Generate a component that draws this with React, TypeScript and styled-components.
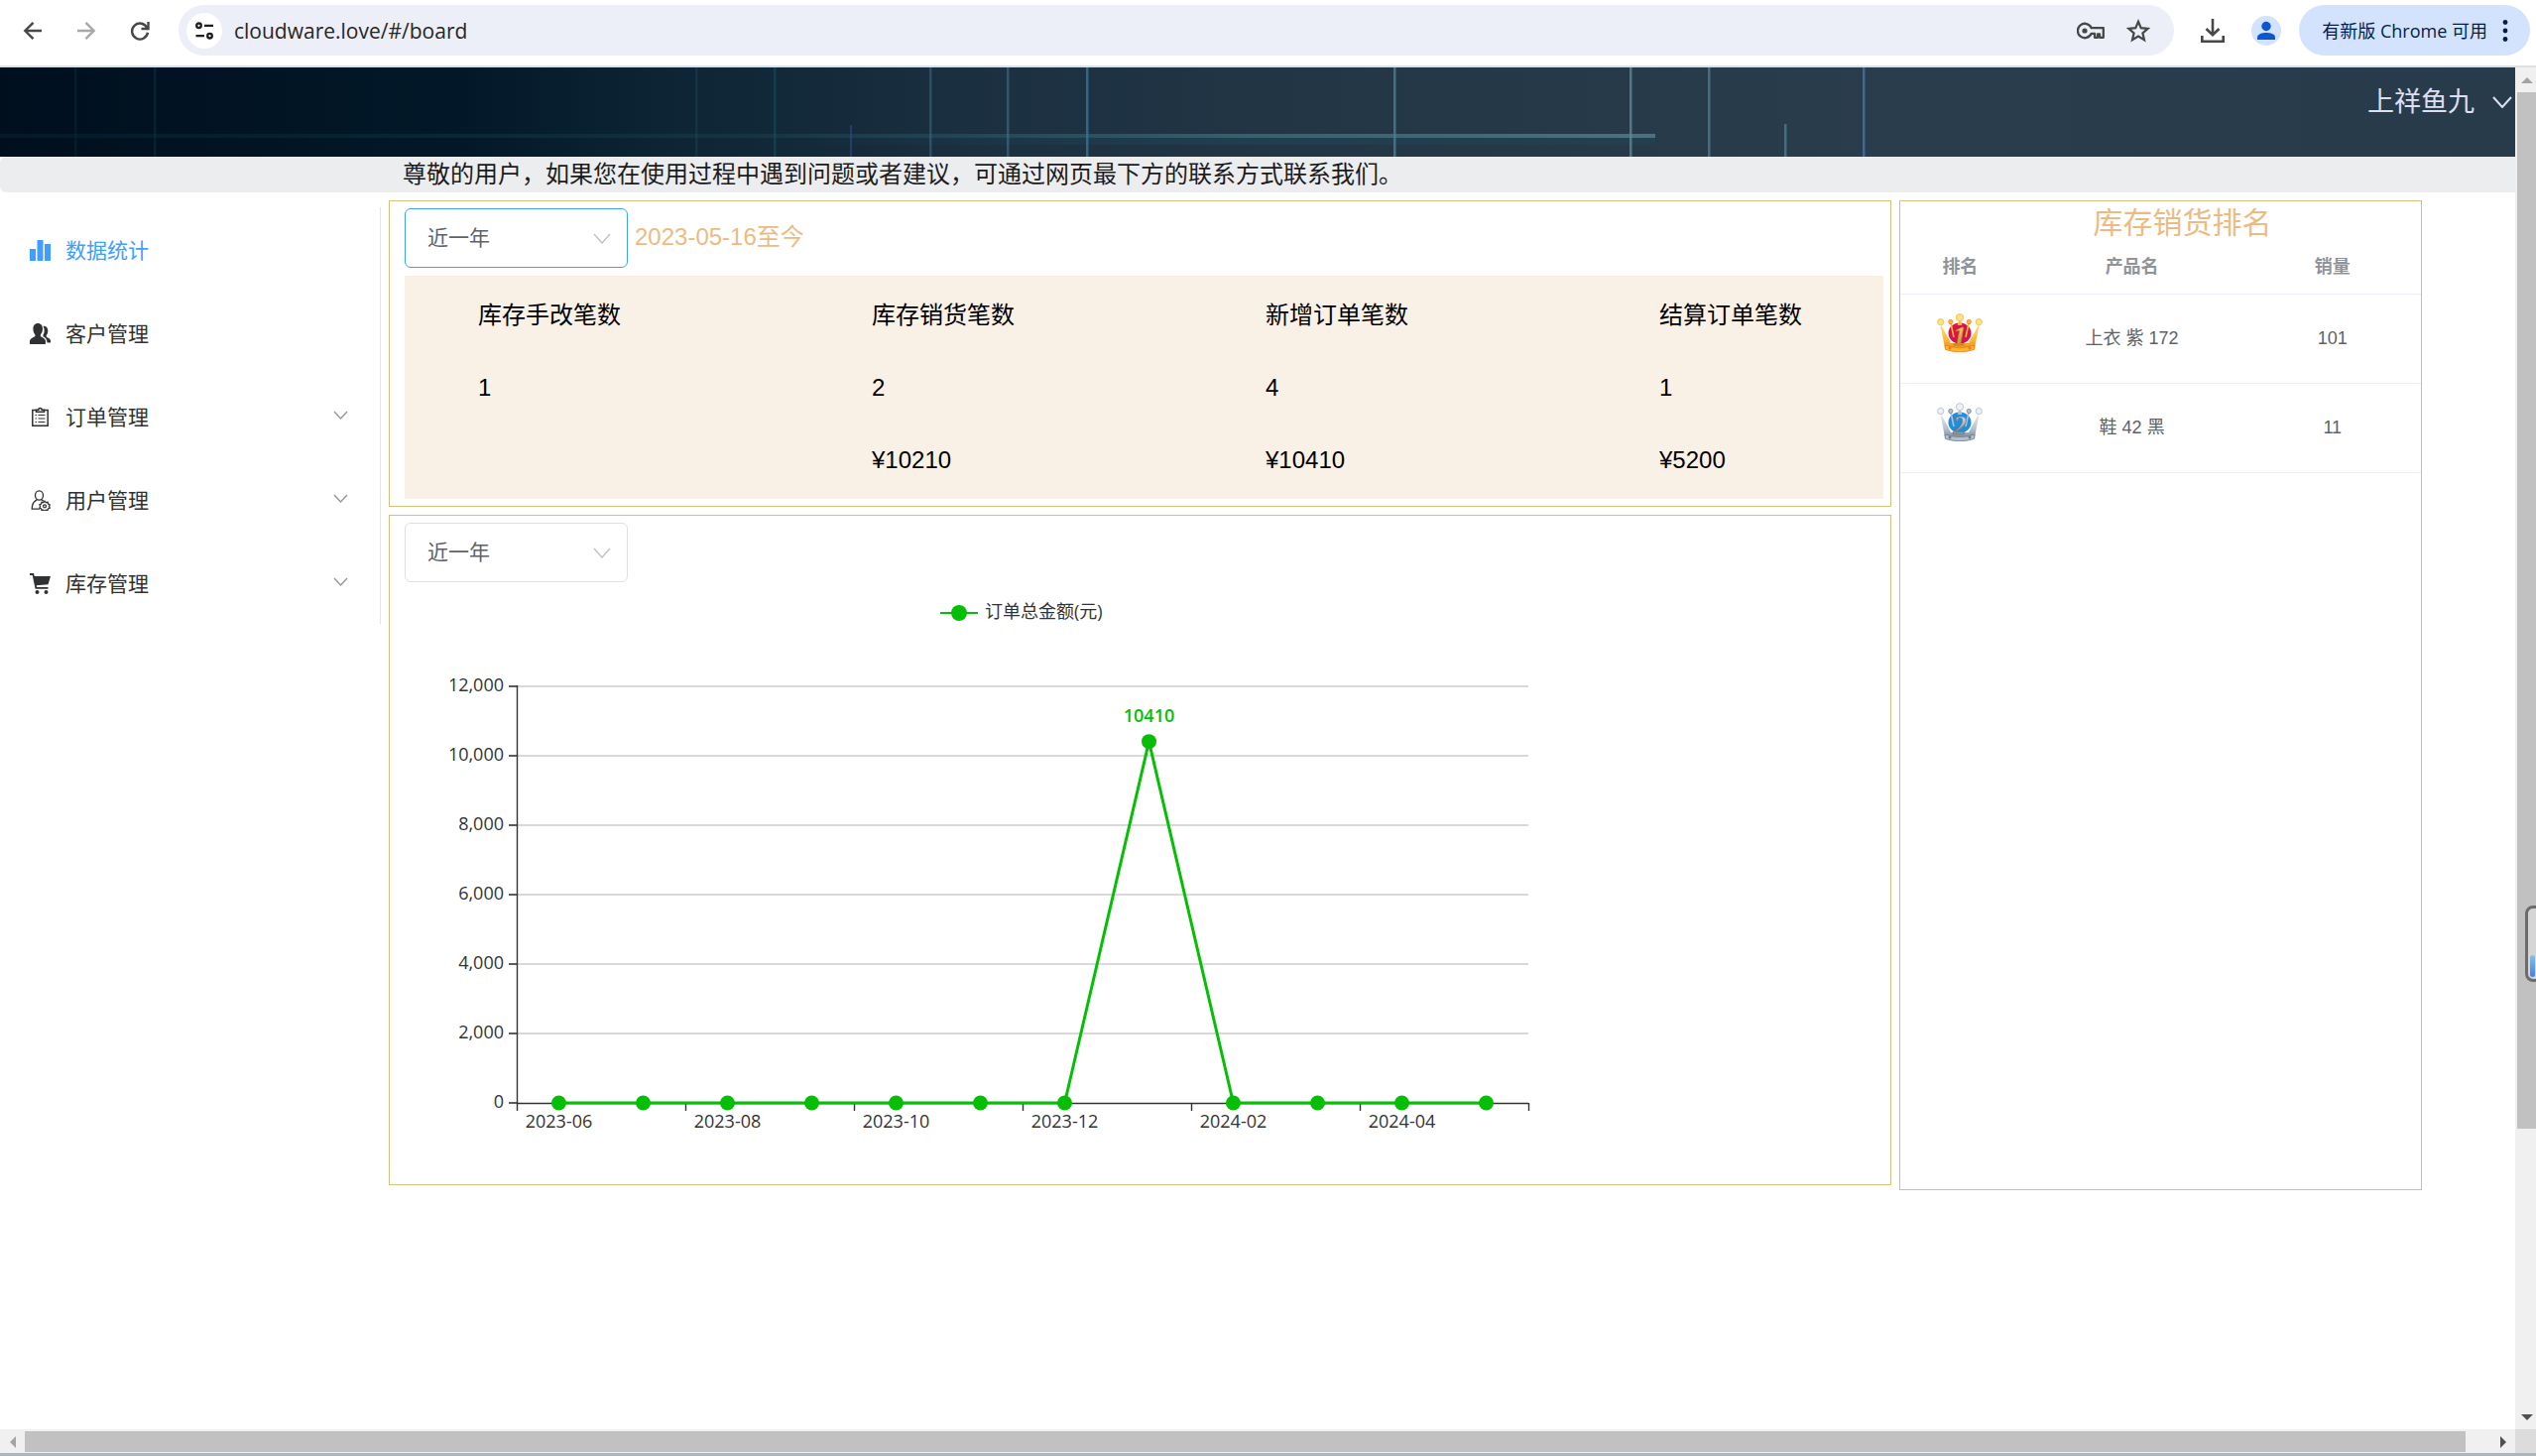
import React from "react";
import styled, { createGlobalStyle } from "styled-components";

const Global = createGlobalStyle`
  *, *::before, *::after { box-sizing: border-box; }
  body {
    margin: 0;
    background: #fff;
    font-family: "Liberation Sans", "Noto Sans CJK SC", sans-serif;
    color: #303133;
  }
  button, input, select { font: inherit; color: inherit; border: 0; background: none; padding: 0; margin: 0; outline: none; }
  button { cursor: pointer; }
  svg { display: block; flex: none; }
  h1, h2, p, ul, dl, dd { margin: 0; padding: 0; }
`;

const Shell = styled.div`
  display: flex;
  flex-direction: column;
  height: 100vh;
  overflow: hidden;
`;

/* ---------- browser toolbar ---------- */

const Toolbar = styled.header`
  display: flex;
  align-items: center;
  height: 68px;
  flex: none;
  padding: 0 6px 5px 18px;
  border-bottom: 2px solid #dce0e1;
  background: #fff;
  font-family: "Open Sans", "Noto Sans CJK SC", sans-serif;
`;

const NavButtons = styled.nav`
  display: flex;
  gap: 24px;
  margin-right: 24px;
`;

const IconButton = styled.button<{ $color?: string }>`
  display: grid;
  place-items: center;
  width: 30px;
  height: 30px;
  flex: none;
  color: ${(p) => p.$color ?? "#474747"};
`;

const AddressBar = styled.form`
  display: flex;
  align-items: center;
  flex: 1;
  height: 51px;
  padding: 0 21px 0 8px;
  gap: 12px;
  border-radius: 26px;
  background: #eceef8;
`;

const SiteButton = styled.button`
  display: grid;
  place-items: center;
  width: 36px;
  height: 36px;
  border-radius: 50%;
  background: #fff;
  color: #1f1f1f;
`;

const UrlInput = styled.input`
  flex: 1;
  min-width: 0;
  font-size: 21px;
  line-height: 30px;
  color: #262626;
`;

const AddressActions = styled.div`
  display: flex;
  gap: 18px;
`;

const ToolbarActions = styled.div`
  display: flex;
  align-items: center;
  gap: 24px;
  margin: 0 18px 0 24px;
`;

const Avatar = styled.button`
  display: grid;
  place-items: center;
  width: 30px;
  height: 30px;
  border-radius: 50%;
  background: #d3e3fd;
  color: #0b57d0;
`;

const UpdateChip = styled.button`
  display: flex;
  align-items: center;
  gap: 15px;
  height: 51px;
  padding: 0 22px 0 23px;
  border-radius: 26px;
  background: #d3e3fd;
  color: #041e49;
  font-size: 18px;
  line-height: 24px;
  white-space: nowrap;
`;

/* ---------- scrolled page ---------- */

const Viewport = styled.div`
  display: flex;
  flex: 1;
  min-height: 0;
`;

const Page = styled.div`
  flex: 1;
  min-width: 0;
  overflow: hidden;
`;

const Banner = styled.div`
  position: relative;
  display: flex;
  justify-content: flex-end;
  height: 90px;
  padding: 17px 3px 0 0;
  overflow: hidden;
  background: linear-gradient(90deg, #000f1e 0%, #021828 18%, #0d2535 27%, #1a2f40 38%, #223646 52%, #293d4d 75%, #283b4b 100%);
`;

const BannerLines = styled.svg`
  position: absolute;
  inset: 0;
  width: 100%;
  height: 100%;
`;

const Account = styled.button`
  position: relative;
  display: flex;
  align-items: center;
  align-self: flex-start;
  gap: 18px;
  height: 36px;
  color: #dcdff2;
  font-size: 27px;
  line-height: 36px;
`;

const Notice = styled.p`
  height: 36px;
  padding-left: 406px;
  border-radius: 6px 0 0 6px;
  background: #ecedef;
  color: #1c1c1c;
  font-size: 24px;
  line-height: 36px;
`;

const Layout = styled.div`
  display: grid;
  grid-template-columns: 384px minmax(0, 1fr) 527px;
  gap: 8px;
  align-items: start;
  padding: 8px 94px 0 0;
`;

const Sidebar = styled.nav`
  margin-top: 7px;
  border-right: 1px solid #e2e4e9;
`;

const MenuItem = styled.button<{ $active?: boolean }>`
  display: flex;
  align-items: center;
  gap: 15px;
  width: 100%;
  height: 84px;
  padding: 3px 32px 0 30px;
  color: ${(p) => (p.$active ? "#409eff" : "#303133")};
  font-size: 21px;
  line-height: 30px;
  text-align: left;
`;

const MenuLabel = styled.span`
  flex: 1;
`;

const MenuArrow = styled.span`
  padding-bottom: 5px;
  color: #909399;
`;

const Column = styled.main`
  display: flex;
  flex-direction: column;
  gap: 8px;
`;

const Card = styled.section`
  border: 1px solid #d0c27c;
  background: #fff;
`;

const PaddedCard = styled(Card)`
  padding: 7px 7px 7px 15px;
`;

const FilterRow = styled.div`
  display: flex;
  align-items: center;
  gap: 7px;
`;

const SelectBox = styled.label<{ $focused?: boolean }>`
  display: grid;
  align-items: center;
  width: 225px;
  height: 60px;
  border: 1px solid ${(p) => (p.$focused ? "#409eff" : "#dcdfe6")};
  border-radius: 6px;
  color: #606266;
`;

const SelectInput = styled.select`
  grid-area: 1 / 1;
  width: 100%;
  height: 58px;
  padding-left: 22px;
  appearance: none;
  font-size: 21px;
  line-height: 30px;
`;

const SelectArrow = styled.span`
  grid-area: 1 / 1;
  justify-self: end;
  margin-right: 16px;
  color: #c0c4cc;
  pointer-events: none;
`;

const Range = styled.span`
  padding-bottom: 3px;
  color: #ecbb82;
  font-size: 24px;
  line-height: 36px;
`;

const Stats = styled.div`
  display: flex;
  justify-content: space-between;
  margin-top: 8px;
  padding: 3px 82px 3px 74px;
  background: #f9f0e6;
  color: #000;
  font-size: 24px;
  line-height: 73px;
`;

const Stat = styled.dl`
  min-height: 219px;
`;

const ChartFrame = styled.div`
  height: 600px;
`;

const AxisText = styled.text`
  fill: #333;
  font-family: "Open Sans", "Noto Sans CJK SC", sans-serif;
  font-size: 18px;
`;

const PeakText = styled(AxisText)`
  fill: #05be05;
  font-weight: 600;
`;

const RankCard = styled(Card)`
  min-height: 998px;
`;

const RankTitle = styled.h2`
  padding: 1px 0 0 44px;
  color: #ecbb82;
  font-size: 30px;
  font-weight: 400;
  line-height: 42px;
  text-align: center;
`;

const Table = styled.table`
  width: 100%;
  border-collapse: collapse;
  table-layout: fixed;
  font-size: 18px;
  line-height: 24px;
  color: #606266;
  text-align: center;
`;

const HeadCell = styled.th<{ $width: string }>`
  width: ${(p) => p.$width};
  height: 50px;
  padding: 0 0 4px;
  border-bottom: 1px solid #ebeef5;
  color: #909399;
  font-weight: 700;
`;

const Cell = styled.td`
  height: 90px;
  padding: 0;
  border-bottom: 1px solid #ebeef5;
`;

const CrownSlot = styled.span`
  display: flex;
  justify-content: center;
  padding-bottom: 12px;
`;

/* ---------- scroll bars ---------- */

const VerticalBar = styled.div`
  display: flex;
  flex-direction: column;
  width: 21px;
  flex: none;
  background: #f0f0f0;
`;

const HorizontalBar = styled.div`
  display: flex;
  align-items: stretch;
  height: 27px;
  flex: none;
  background: #f0f0f0;
  border-bottom: 3px solid #a9b8be;
`;

const BarButton = styled.button<{ $dark?: boolean }>`
  display: grid;
  place-items: center;
  width: 25px;
  height: 25px;
  flex: none;
  color: ${(p) => (p.$dark ? "#505050" : "#a3a3a3")};
`;

const VerticalButton = styled(BarButton)`
  width: 21px;
  padding-left: 2px;
`;

const Track = styled.div`
  position: relative;
  display: flex;
  flex-direction: column;
  flex: 1;
  padding-left: 2px;
`;

const VerticalThumb = styled.div`
  height: 79%;
  background: #c1c1c1;
`;

const HorizontalTrack = styled.div`
  flex: 1;
  padding: 2px 0 1px;
`;

const HorizontalThumb = styled.div`
  width: 99%;
  height: 100%;
  background: #c1c1c1;
`;

const Corner = styled.div`
  width: 21px;
  background: #dcdcdc;
`;

const FloatingMeter = styled.div`
  position: absolute;
  top: 62%;
  left: 10px;
  display: flex;
  align-items: flex-end;
  width: 20px;
  height: 77px;
  padding: 2px;
  border: 3px solid #6c6c6c;
  border-radius: 8px;
  background: #d5d5d5;
`;

const MeterFill = styled.div`
  width: 5px;
  height: 22px;
  border-radius: 3px;
  background: linear-gradient(#7cc3f5, #3b82f0);
`;

/* ---------- icons ---------- */

const Chevron = ({ w, h, stroke = 1.5 }: { w: number; h: number; stroke?: number }) => (
  <svg width={w} height={h} viewBox={`0 0 ${w} ${h}`} fill="none" stroke="currentColor" strokeWidth={stroke} aria-hidden="true">
    <path d={`M1 1 L${w / 2} ${h - 1} L${w - 1} 1`} />
  </svg>
);

const Triangle = ({ dir }: { dir: "up" | "down" | "left" | "right" }) => {
  const paths = {
    up: "M0 9 L6 3 L12 9Z",
    down: "M0 3 L6 9 L12 3Z",
    left: "M9 0 L3 6 L9 12Z",
    right: "M3 0 L9 6 L3 12Z",
  };
  return (
    <svg width="12" height="12" viewBox="0 0 12 12" fill="currentColor" aria-hidden="true">
      <path d={paths[dir]} />
    </svg>
  );
};

const BackIcon = () => (
  <svg width="20" height="20" viewBox="0 0 20 20" fill="none" stroke="currentColor" strokeWidth="2.4" aria-hidden="true">
    <path d="M19 10H3M10.5 1.8L2.3 10l8.2 8.2" />
  </svg>
);

const ForwardIcon = () => (
  <svg width="20" height="20" viewBox="0 0 20 20" fill="none" stroke="currentColor" strokeWidth="2.4" aria-hidden="true">
    <path d="M1 10H17M9.5 1.8L17.7 10l-8.2 8.2" />
  </svg>
);

const ReloadIcon = () => (
  <svg width="22" height="22" viewBox="0 0 22 22" fill="none" stroke="currentColor" strokeWidth="2.4" aria-hidden="true">
    <path d="M18.5 8.5A8 8 0 1 0 19 12.8" />
    <path d="M19.5 2v7h-7" />
  </svg>
);

const SiteIcon = () => (
  <svg width="20" height="20" viewBox="0 0 20 20" fill="none" stroke="currentColor" strokeWidth="2.3" aria-hidden="true">
    <circle cx="4.5" cy="4.8" r="2.3" />
    <path d="M10 4.8H19M1.5 15.2H10" />
    <circle cx="15.5" cy="15.2" r="2.3" />
  </svg>
);

const KeyIcon = () => (
  <svg width="28" height="18" viewBox="0 0 28 18" fill="none" stroke="currentColor" strokeWidth="2.3" aria-hidden="true">
    <path d="M14.7 6.2A7.2 7.2 0 1 0 14.7 11.8H18V15.8H21V12.5H23V15.8H26.8V6.2Z" strokeLinejoin="round" />
    <circle cx="8" cy="9" r="2.6" fill="currentColor" stroke="none" />
  </svg>
);

const StarIcon = () => (
  <svg width="24" height="24" viewBox="0 0 24 24" fill="none" stroke="currentColor" strokeWidth="2.2" aria-hidden="true">
    <path d="M12 2.8L14.7 9.2L21.6 9.8L16.4 14.3L18 21.1L12 17.5L6 21.1L7.6 14.3L2.4 9.8L9.3 9.2Z" />
  </svg>
);

const DownloadIcon = () => (
  <svg width="26" height="26" viewBox="0 0 26 26" fill="none" stroke="currentColor" strokeWidth="2.6" aria-hidden="true">
    <path d="M13 1V17M6.5 11L13 17.3L19.5 11M2.3 18V23.7H23.7V18" />
  </svg>
);

const PersonIcon = () => (
  <svg width="20" height="20" viewBox="0 0 20 20" fill="currentColor" aria-hidden="true">
    <circle cx="10" cy="5.5" r="4.7" />
    <path d="M1 19V16.5C1 13.3 6 12 10 12s9 1.3 9 4.500V19Z" />
  </svg>
);

const DotsIcon = () => (
  <svg width="6" height="24" viewBox="0 0 6 24" fill="currentColor" aria-hidden="true">
    <circle cx="3" cy="3.5" r="2.4" />
    <circle cx="3" cy="12" r="2.4" />
    <circle cx="3" cy="20.5" r="2.4" />
  </svg>
);

const HistogramIcon = () => (
  <svg width="21" height="21" viewBox="0 0 21 21" fill="currentColor" aria-hidden="true">
    <rect x="0" y="9" width="6" height="12" />
    <rect x="7.5" y="0" width="6" height="21" />
    <rect x="15" y="4" width="6" height="17" />
  </svg>
);

const CustomersIcon = () => (
  <svg width="21" height="21" viewBox="0 0 21 21" fill="currentColor" aria-hidden="true">
    <path d="M8.200 0C11.300 0 13 2.300 13 5.600c0 2.500-.9 4.700-2.100 6v1.500c0 .7 4.600 1.600 5 4.400.2 1.300.1 2.400-.1 3.500H.2c-.3-1.100-.3-2.200-.1-3.500.5-2.800 5.300-3.700 5.300-4.400v-1.500C4.200 10.300 3.400 8.100 3.400 5.600 3.400 2.300 5 0 8.200 0Z" />
    <path d="M13.500 2.800c3.300-.3 4.800 2.100 4.800 4.600 0 2-.7 3.700-1.500 4.700v1.300c0 .6 3.500 1.300 4 3.400.2 1 .3 1.900.1 2.700h-3.400c-.2-3.500-1.300-5.200-4.100-6.300v-1.500c1.600-2.200 1.800-6 .1-8.900Z" />
  </svg>
);

const OrdersIcon = () => (
  <svg width="21" height="21" viewBox="0 0 21 21" fill="none" stroke="currentColor" strokeWidth="1.5" aria-hidden="true">
    <path d="M6.500 3.500H2.800V19.200H18.200V3.500H14.500" />
    <path d="M6.500 5.200V3.200H8.800C8.800 .8 12.200 .8 12.200 3.200H14.500V5.200Z" />
    <path d="M5.500 8.500h1.500M8.500 8.500h7M5.500 12h1.500M8.500 12h7M5.500 15.500h1.500M8.500 15.500h7" strokeWidth="1.2" />
  </svg>
);

const UsersIcon = () => (
  <svg width="21" height="21" viewBox="0 0 21 21" fill="none" stroke="currentColor" strokeWidth="1.3" aria-hidden="true">
    <ellipse cx="9.5" cy="5.5" rx="4" ry="4.6" />
    <path d="M7.200 9.800C3.800 11.500 2.200 14.500 2.200 19.200H10M11.800 9.800c.9.400 1.500.8 2.200 1.500" />
    <path d="M15 11.300l1.200 1.300 1.800-.3.500 1.700 1.700.8-.7 1.700.7 1.600-1.700.8-.5 1.600-1.800-.2-1.200 1.200-1.300-1.200-1.700.2-.5-1.600-1.600-.8.7-1.600-.7-1.700 1.600-.8.500-1.700 1.700.3Z" />
    <circle cx="15" cy="16.3" r="1.5" />
  </svg>
);

const CartIcon = () => (
  <svg width="21" height="21" viewBox="0 0 21 21" fill="currentColor" aria-hidden="true">
    <path d="M0 0H4L4.700 3H21L18.500 11.300L6.700 12.200L7.100 14H18.500V15.800H5.600L2.700 1.900H0Z" />
    <circle cx="7.5" cy="18.9" r="2" />
    <circle cx="16.5" cy="18.9" r="2" />
  </svg>
);

type CrownTone = { light: string; mid: string; deep: string; gem: string; digit: string };

const GOLD: CrownTone = { light: "#ffe38a", mid: "#fdb92e", deep: "#ee7a1c", gem: "#d8124f", digit: "#b8801a" };
const SILVER: CrownTone = { light: "#eef1f6", mid: "#b5bfcc", deep: "#6d7c8f", gem: "#1e8fdd", digit: "#6f7782" };

const Crown = ({ rank, tone }: { rank: number; tone: CrownTone }) => (
  <svg width="46" height="39" viewBox="0 0 46 39" role="img" aria-label={`第${rank}名`}>
    <defs>
      <linearGradient id={`crown${rank}`} x1="0" y1="0" x2="0" y2="1">
        <stop offset="0" stopColor={tone.light} />
        <stop offset=".6" stopColor={tone.mid} />
        <stop offset="1" stopColor={tone.deep} />
      </linearGradient>
      <linearGradient id={`digit${rank}`} x1="0" y1="0" x2="0" y2="1">
        <stop offset="0" stopColor={tone.light} />
        <stop offset="1" stopColor={tone.digit} />
      </linearGradient>
    </defs>
    <ellipse cx="23" cy="20" rx="11.5" ry="10.5" fill={tone.gem} />
    <path
      d="M3 9.500L8 35Q23 41 38 35L43 9.500L34 26L32 30H14L12 26Z"
      fill={`url(#crown${rank})`}
    />
    <path d="M13.800 9L17 24M32.200 9L29 24" stroke={tone.mid} strokeWidth="1.6" />
    <path d="M20.500 12L23 5L25.500 12Z" fill={tone.mid} />
    <path d="M8 32Q23 37 38 32L37.500 36.500Q23 41 8.500 36.500Z" fill={tone.mid} stroke={tone.deep} strokeWidth=".8" />
    <circle cx="13" cy="35" r="1.5" fill={tone.deep} />
    <circle cx="33" cy="35" r="1.5" fill={tone.deep} />
    <circle cx="3.7" cy="8.5" r="3.1" fill={tone.light} stroke={tone.mid} strokeWidth=".9" />
    <circle cx="42.3" cy="8.5" r="3.1" fill={tone.light} stroke={tone.mid} strokeWidth=".9" />
    <circle cx="13.8" cy="8.5" r="2.2" fill={tone.mid} stroke={tone.deep} strokeWidth=".7" />
    <circle cx="32.2" cy="8.5" r="2.2" fill={tone.mid} stroke={tone.deep} strokeWidth=".7" />
    <circle cx="23" cy="4.2" r="3.6" fill={tone.light} stroke={tone.mid} strokeWidth=".9" />
    <text
      x="23"
      y="32"
      textAnchor="middle"
      fontFamily="Liberation Serif, serif"
      fontWeight="700"
      fontStyle="italic"
      fontSize="27"
      fill={`url(#digit${rank})`}
      stroke={tone.digit}
      strokeWidth=".7"
    >
      {rank}
    </text>
  </svg>
);

/* ---------- data ---------- */

const menu = [
  { label: "数据统计", icon: <HistogramIcon />, active: true },
  { label: "客户管理", icon: <CustomersIcon /> },
  { label: "订单管理", icon: <OrdersIcon />, expandable: true },
  { label: "用户管理", icon: <UsersIcon />, expandable: true },
  { label: "库存管理", icon: <CartIcon />, expandable: true },
];

const stats = [
  { label: "库存手改笔数", values: ["1"] },
  { label: "库存销货笔数", values: ["2", "¥10210"] },
  { label: "新增订单笔数", values: ["4", "¥10410"] },
  { label: "结算订单笔数", values: ["1", "¥5200"] },
];

const ranking = [
  { rank: 1, name: "上衣 紫 172", sold: 101, tone: GOLD },
  { rank: 2, name: "鞋 42 黑", sold: 11, tone: SILVER },
];

const months = [
  "2023-06", "2023-07", "2023-08", "2023-09", "2023-10", "2023-11",
  "2023-12", "2024-01", "2024-02", "2024-03", "2024-04", "2024-05",
];
const amounts = [0, 0, 0, 0, 0, 0, 0, 10410, 0, 0, 0, 0];

/* ---------- parts ---------- */

const YearSelect = ({ focused, label }: { focused?: boolean; label: string }) => (
  <SelectBox $focused={focused}>
    <SelectInput aria-label={label} defaultValue="year">
      <option value="year">近一年</option>
    </SelectInput>
    <SelectArrow>
      <Chevron w={18} h={11} />
    </SelectArrow>
  </SelectBox>
);

const OrderChart = () => {
  const left = 113;
  const right = 1133;
  const top = 105;
  const bottom = 525;
  const step = (right - left) / months.length;
  const x = (i: number) => left + step * (i + 0.5);
  const y = (v: number) => bottom - (v / 12000) * (bottom - top);
  const levels = [0, 2000, 4000, 6000, 8000, 10000, 12000];
  const peak = amounts.indexOf(Math.max(...amounts));
  return (
    <svg width="1245" height="600" viewBox="0 0 1245 600" role="img" aria-label="订单总金额">
      <path d="M540 31H578" stroke="#05be05" strokeWidth="2" />
      <circle cx="559" cy="31" r="8" fill="#05be05" />
      <AxisText x="585" y="36">订单总金额(元)</AxisText>
      {levels.map((v) => (
        <g key={v}>
          {v > 0 && <path d={`M${left} ${y(v)}H${right}`} stroke="#ccc" strokeWidth="1.6" />}
          <path d={`M${left - 8} ${y(v)}H${left}`} stroke="#333" strokeWidth="1.6" />
          <AxisText x={left - 13} y={y(v) + 5} textAnchor="end">
            {v.toLocaleString("en-US")}
          </AxisText>
        </g>
      ))}
      <path
        d={`M${left + 0.5} ${top - 1}V${bottom + 0.5}H${right}`}
        fill="none"
        stroke="#333"
        strokeWidth="1.4"
      />
      {[0, 2, 4, 6, 8, 10, 12].map((i) => (
        <path key={i} d={`M${left + step * i + 0.5} ${bottom}v8`} stroke="#333" strokeWidth="1.4" />
      ))}
      {months.map((m, i) => i % 2 === 0 && (
        <AxisText key={m} x={x(i)} y={bottom + 25} textAnchor="middle">{m}</AxisText>
      ))}
      <polyline
        points={amounts.map((v, i) => `${x(i)},${y(v)}`).join(" ")}
        fill="none"
        stroke="#05be05"
        strokeWidth="3"
        strokeLinejoin="bevel"
      />
      {amounts.map((v, i) => (
        <circle key={months[i]} cx={x(i)} cy={y(v)} r="7.5" fill="#05be05" />
      ))}
      <PeakText x={x(peak)} y={y(amounts[peak]) - 20} textAnchor="middle">{amounts[peak]}</PeakText>
    </svg>
  );
};

const gridLines = [
  { x: 75, c: "#0a3040", o: 0.4 },
  { x: 155, c: "#0d3442", o: 0.5 },
  { x: 701, c: "#24475f", o: 0.4 },
  { x: 780, c: "#1c5260", o: 0.5 },
  { x: 937, c: "#3a6580", o: 0.6 },
  { x: 1015, c: "#43718a", o: 0.6 },
  { x: 1095, c: "#34759a", o: 0.8 },
  { x: 1405, c: "#4a7f90", o: 0.8 },
  { x: 1643, c: "#5b8a99", o: 0.8 },
  { x: 1722, c: "#55788c", o: 0.8 },
  { x: 1878, c: "#4d719c", o: 0.8 },
];

export default function App() {
  return (
    <Shell>
      <Global />
      <Toolbar>
        <NavButtons aria-label="浏览器导航">
          <IconButton aria-label="后退"><BackIcon /></IconButton>
          <IconButton aria-label="前进" $color="#a8a8a8"><ForwardIcon /></IconButton>
          <IconButton aria-label="重新加载"><ReloadIcon /></IconButton>
        </NavButtons>
        <AddressBar>
          <SiteButton type="button" aria-label="网站信息"><SiteIcon /></SiteButton>
          <UrlInput aria-label="地址" defaultValue="cloudware.love/#/board" />
          <AddressActions>
            <IconButton type="button" aria-label="密码"><KeyIcon /></IconButton>
            <IconButton type="button" aria-label="收藏"><StarIcon /></IconButton>
          </AddressActions>
        </AddressBar>
        <ToolbarActions>
          <IconButton aria-label="下载"><DownloadIcon /></IconButton>
          <Avatar aria-label="个人资料"><PersonIcon /></Avatar>
        </ToolbarActions>
        <UpdateChip>
          有新版 Chrome 可用
          <DotsIcon />
        </UpdateChip>
      </Toolbar>

      <Viewport>
        <Page>
          <Banner>
            <BannerLines viewBox="0 0 2536 90" preserveAspectRatio="xMinYMin slice" aria-hidden="true">
              <defs>
                <linearGradient id="beam" x1="0" y1="0" x2="1669" y2="0" gradientUnits="userSpaceOnUse">
                  <stop offset="0" stopColor="#0b3248" stopOpacity=".3" />
                  <stop offset=".45" stopColor="#1f4557" stopOpacity=".4" />
                  <stop offset=".75" stopColor="#3b6472" stopOpacity=".9" />
                  <stop offset="1" stopColor="#4c7180" />
                </linearGradient>
                <linearGradient id="glow" x1="800" y1="0" x2="1669" y2="0" gradientUnits="userSpaceOnUse">
                  <stop offset="0" stopColor="#1d4a5c" stopOpacity="0" />
                  <stop offset=".5" stopColor="#1d4a5c" stopOpacity=".45" />
                  <stop offset="1" stopColor="#1d4a5c" stopOpacity=".3" />
                </linearGradient>
              </defs>
              <rect x="0" y="67" width="1669" height="4" fill="url(#beam)" />
              <rect x="800" y="71" width="869" height="7" fill="url(#glow)" />
              {gridLines.map((l) => (
                <rect key={l.x} x={l.x} y="0" width="2.5" height="90" fill={l.c} opacity={l.o} />
              ))}
              <rect x="857" y="58" width="2" height="32" fill="#2b4f78" opacity=".6" />
              <rect x="1799" y="57" width="2.5" height="33" fill="#4a7c90" opacity=".8" />
            </BannerLines>
            <Account>
              上祥鱼九
              <Chevron w={20} h={12} stroke={2} />
            </Account>
          </Banner>
          <Notice>尊敬的用户，如果您在使用过程中遇到问题或者建议，可通过网页最下方的联系方式联系我们。</Notice>

          <Layout>
            <Sidebar aria-label="主菜单">
              {menu.map((m) => (
                <MenuItem key={m.label} $active={m.active}>
                  {m.icon}
                  <MenuLabel>{m.label}</MenuLabel>
                  {m.expandable && (
                    <MenuArrow>
                      <Chevron w={15} h={9} stroke={1.3} />
                    </MenuArrow>
                  )}
                </MenuItem>
              ))}
            </Sidebar>

            <Column>
              <PaddedCard>
                <FilterRow>
                  <YearSelect focused label="统计时间范围" />
                  <Range>2023-05-16至今</Range>
                </FilterRow>
                <Stats>
                  {stats.map((s) => (
                    <Stat key={s.label}>
                      <dt>{s.label}</dt>
                      {s.values.map((v) => (
                        <dd key={v}>{v}</dd>
                      ))}
                    </Stat>
                  ))}
                </Stats>
              </PaddedCard>

              <PaddedCard>
                <YearSelect label="图表时间范围" />
                <ChartFrame>
                  <OrderChart />
                </ChartFrame>
              </PaddedCard>
            </Column>

            <RankCard>
              <RankTitle>库存销货排名</RankTitle>
              <Table>
                <thead>
                  <tr>
                    <HeadCell $width="23%">排名</HeadCell>
                    <HeadCell $width="43%">产品名</HeadCell>
                    <HeadCell $width="34%">销量</HeadCell>
                  </tr>
                </thead>
                <tbody>
                  {ranking.map((r) => (
                    <tr key={r.rank}>
                      <Cell><CrownSlot><Crown rank={r.rank} tone={r.tone} /></CrownSlot></Cell>
                      <Cell>{r.name}</Cell>
                      <Cell>{r.sold}</Cell>
                    </tr>
                  ))}
                </tbody>
              </Table>
            </RankCard>
          </Layout>
        </Page>

        <VerticalBar>
          <VerticalButton aria-label="向上滚动"><Triangle dir="up" /></VerticalButton>
          <Track>
            <VerticalThumb />
            <FloatingMeter><MeterFill /></FloatingMeter>
          </Track>
          <VerticalButton aria-label="向下滚动" $dark><Triangle dir="down" /></VerticalButton>
        </VerticalBar>
      </Viewport>

      <HorizontalBar>
        <BarButton aria-label="向左滚动"><Triangle dir="left" /></BarButton>
        <HorizontalTrack><HorizontalThumb /></HorizontalTrack>
        <BarButton aria-label="向右滚动" $dark><Triangle dir="right" /></BarButton>
        <Corner />
      </HorizontalBar>
    </Shell>
  );
}
